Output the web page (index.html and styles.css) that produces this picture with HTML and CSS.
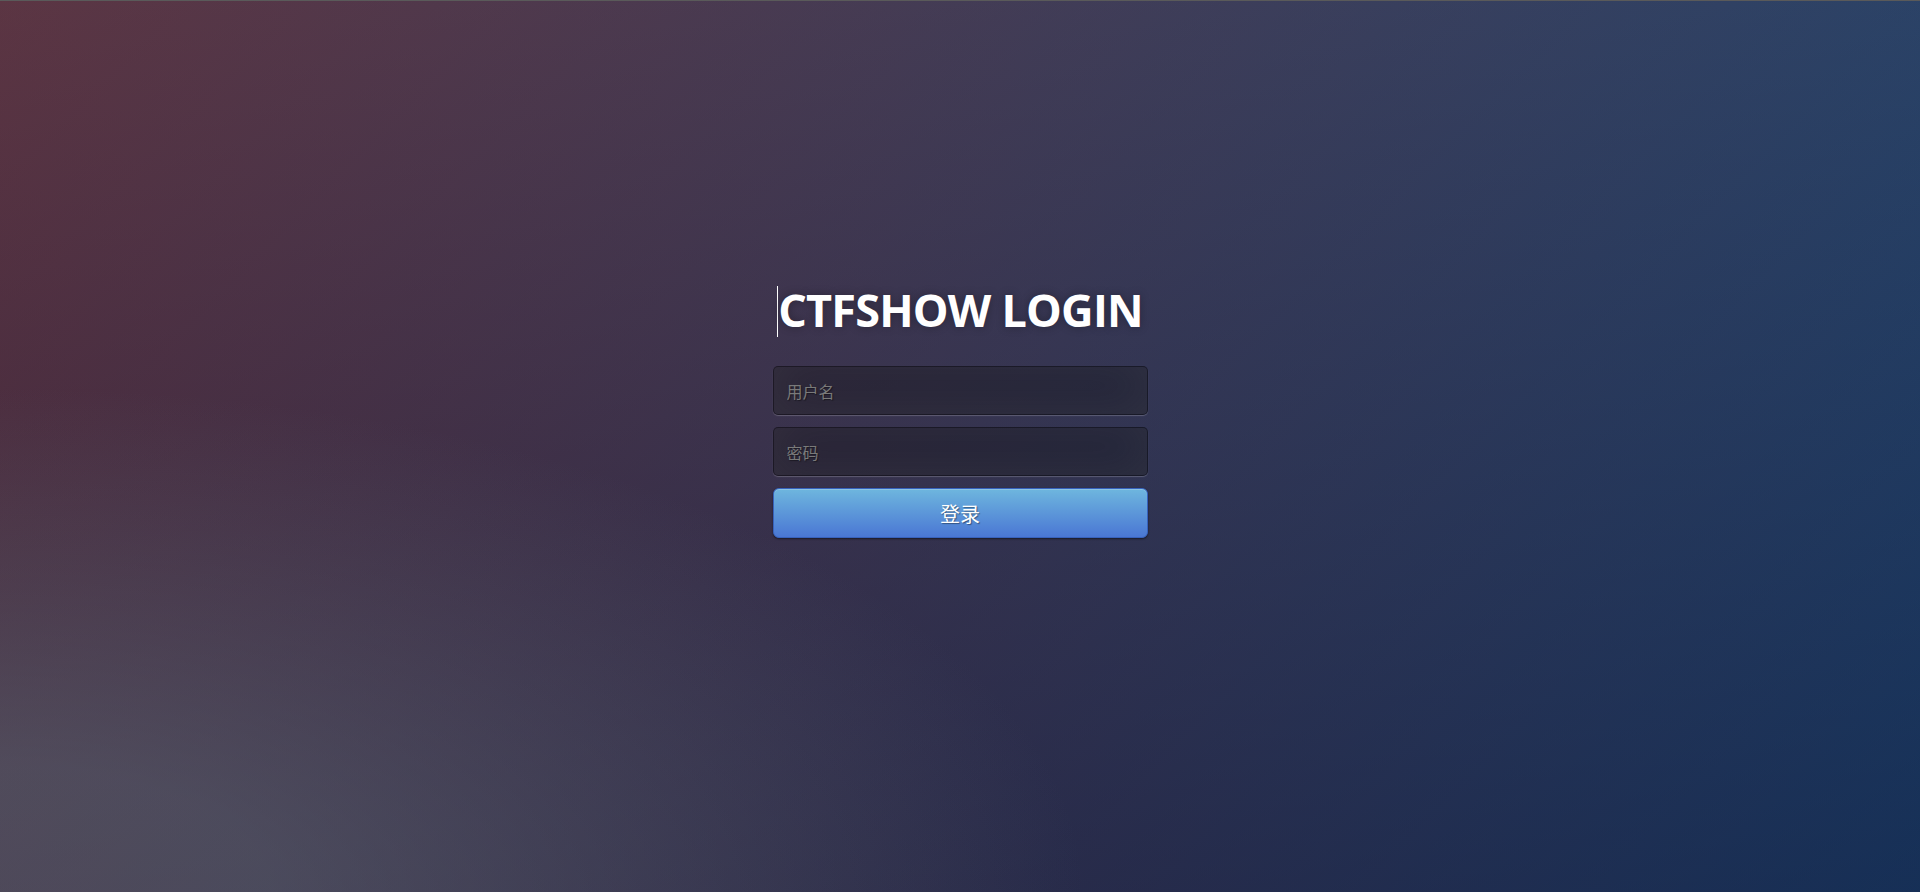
FILE: index.html
```html
<!DOCTYPE html>
<html lang="zh-CN">
<head>
<meta charset="utf-8">
<title>CTFSHOW LOGIN</title>
<link rel="stylesheet" href="styles.css">
</head>
<body>
<div class="page">
  <div class="login">
    <h1 class="title"><span class="caret"></span>CTFSHOW LOGIN</h1>
    <form class="form">
      <input class="field" type="text" placeholder="用户名">
      <input class="field" type="password" placeholder="密码">
      <button class="btn" type="button">登录</button>
    </form>
  </div>
</div>
</body>
</html>
```
FILE: styles.css
```css
html, body {
  margin: 0;
  padding: 0;
  height: 100%;
}
body {
  font-family: "Open Sans", "Noto Sans CJK SC", sans-serif;
  background-color: #2a2f4a;
  background:
    radial-gradient(ellipse farthest-corner at 0% 100%, rgba(104,128,138,.4) 10%, rgba(138,114,76,0) 40%),
    linear-gradient(to bottom, rgba(57,173,219,.25) 0%, rgba(42,60,87,.4) 100%),
    linear-gradient(135deg, #670d10 0%, #092756 100%);
  border-top: 1px solid #5a5a5a;
  box-sizing: border-box;
  overflow: hidden;
}
.page {
  height: 891px;
  display: flex;
  align-items: center;
  justify-content: center;
}
.login {
  width: 375px;
  height: 375px;
  display: flex;
  flex-direction: column;
}
.title {
  margin: 23px 0 28px;
  color: #fff;
  font-size: 45px;
  line-height: 56px;
  font-weight: 700;
  letter-spacing: -0.8px;
  text-align: center;
  text-shadow: 0 0 10px rgba(0,0,0,.3);
  white-space: nowrap;
}
.caret {
  display: inline-block;
  width: 1px;
  height: 51px;
  background: #fff;
  vertical-align: -10px;
  margin-right: 0;
}
.form {
  display: flex;
  flex-direction: column;
  gap: 12px;
}
.field {
  box-sizing: border-box;
  width: 375px;
  height: 49px;
  padding: 0 13px;
  margin: 0;
  font-family: "Noto Sans CJK SC", sans-serif;
  font-size: 16px;
  color: #fff;
  background: rgba(0,0,0,.3);
  border: 1px solid rgba(0,0,0,.3);
  border-radius: 5px;
  outline: none;
  box-shadow: inset 0 -5px 45px rgba(100,100,100,.2), 0 1px 1px rgba(255,255,255,.2);
}
.field::placeholder {
  color: #7a7a7a;
  text-shadow: 1px 1px 1px rgba(0,0,0,.4);
}
.btn {
  box-sizing: border-box;
  width: 375px;
  height: 50px;
  margin: 0;
  padding: 0;
  font-family: "Noto Sans CJK SC", sans-serif;
  font-size: 20px;
  color: #fff;
  text-shadow: 1px 1px 1px rgba(0,0,0,.4);
  background-color: #4a77d4;
  background-image: linear-gradient(to bottom, #6eb6de, #4a77d4);
  border: 1px solid #3762bc;
  border-radius: 6px;
  box-shadow: inset 0 1px 0 rgba(255,255,255,.2), 0 1px 2px rgba(0,0,0,.5);
  cursor: pointer;
}
```
